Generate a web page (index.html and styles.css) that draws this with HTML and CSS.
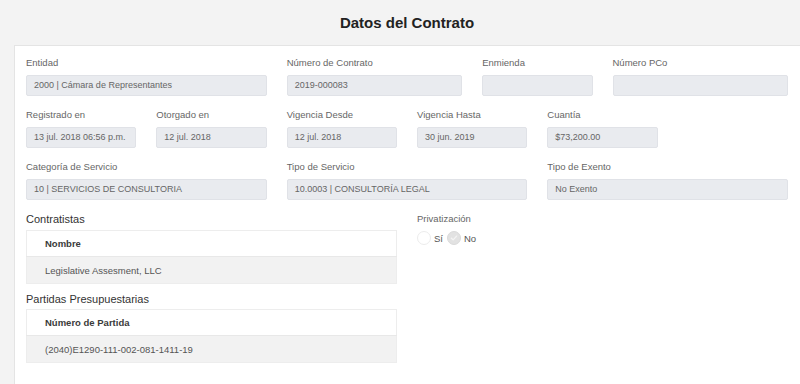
FILE: index.html
```html
<!DOCTYPE html>
<html lang="es">
<head>
  <meta charset="UTF-8" />
  <meta name="viewport" content="width=device-width, initial-scale=1.0" />
  <title>Datos del Contrato</title>
  <link rel="stylesheet" href="styles.css">
</head>
<body>
  <main class="page">
    <h1 class="title">Datos del Contrato</h1>
    <section class="card">
      <div class="grid">
        <div class="field span-4">
          <label>Entidad</label>
          <div class="input">2000 | Cámara de Representantes</div>
        </div>
        <div class="field span-3">
          <label>Número de Contrato</label>
          <div class="input">2019-000083</div>
        </div>
        <div class="field span-2">
          <label>Enmienda</label>
          <div class="input"></div>
        </div>
        <div class="field span-3">
          <label>Número PCo</label>
          <div class="input"></div>
        </div>

        <div class="field span-2">
          <label>Registrado en</label>
          <div class="input">13 jul. 2018 06:56 p.m.</div>
        </div>
        <div class="field span-2">
          <label>Otorgado en</label>
          <div class="input">12 jul. 2018</div>
        </div>
        <div class="field span-2">
          <label>Vigencia Desde</label>
          <div class="input">12 jul. 2018</div>
        </div>
        <div class="field span-2">
          <label>Vigencia Hasta</label>
          <div class="input">30 jun. 2019</div>
        </div>
        <div class="field span-2">
          <label>Cuantía</label>
          <div class="input">$73,200.00</div>
        </div>
        <div class="span-2"></div>

        <div class="field span-4">
          <label>Categoría de Servicio</label>
          <div class="input">10 | SERVICIOS DE CONSULTORIA</div>
        </div>
        <div class="field span-4">
          <label>Tipo de Servicio</label>
          <div class="input">10.0003 | CONSULTORÍA LEGAL</div>
        </div>
        <div class="field span-4">
          <label>Tipo de Exento</label>
          <div class="input">No Exento</div>
        </div>

        <div class="span-6">
          <h2 class="section-title">Contratistas</h2>
          <table class="list">
            <thead><tr><th>Nombre</th></tr></thead>
            <tbody><tr><td>Legislative Assesment, LLC</td></tr></tbody>
          </table>
          <h2 class="section-title second">Partidas Presupuestarias</h2>
          <table class="list">
            <thead><tr><th>Número de Partida</th></tr></thead>
            <tbody><tr><td>(2040)E1290-111-002-081-1411-19</td></tr></tbody>
          </table>
        </div>
        <div class="field span-6">
          <label>Privatización</label>
          <div class="radios">
            <span class="radio"></span>
            <span class="radio-text">Sí</span>
            <span class="radio checked">
              <svg viewBox="0 0 14 14" aria-hidden="true"><path d="M4 7.2l2 2 4-4.4"/></svg>
            </span>
            <span class="radio-text">No</span>
          </div>
        </div>
      </div>
    </section>
  </main>
</body>
</html>
```

FILE: styles.css
```css
body {
  margin: 0;
  background-color: #f3f3f3;
  font-family: "Liberation Sans", Arial, sans-serif;
  color: #555;
  overflow: hidden;
}
.page {
  padding-left: 14px;
  height: 100vh;
  display: flex;
  flex-direction: column;
}
.title {
  margin: 0;
  height: 45px;
  flex-shrink: 0;
  display: flex;
  align-items: center;
  justify-content: center;
  font-size: 15px;
  font-weight: bold;
  color: #222;
}
.card {
  flex: 1;
  background-color: #ffffff;
  border-top: 1px solid #e4e4e4;
  border-left: 1px solid #e4e4e4;
  padding: 10px 12px 0 11px;
  overflow: hidden;
}
.grid {
  display: grid;
  grid-template-columns: repeat(12, 1fr);
  column-gap: 20px;
  row-gap: 12px;
}
.span-2 { grid-column: span 2; }
.span-3 { grid-column: span 3; }
.span-4 { grid-column: span 4; }
.span-6 { grid-column: span 6; }
.field label {
  display: block;
  font-size: 9.5px;
  line-height: 14px;
  color: #666;
  margin-bottom: 5px;
}
.input {
  height: 21px;
  box-sizing: border-box;
  background-color: #e9ebef;
  border: 1px solid #e0e2e7;
  border-radius: 2px;
  padding: 0 7px;
  font-size: 9px;
  line-height: 19px;
  color: #666;
  white-space: nowrap;
  overflow: hidden;
}
.section-title {
  margin: 0 0 4px;
  font-size: 11px;
  font-weight: normal;
  line-height: 14px;
  color: #333;
}
.section-title.second {
  margin-top: 8px;
  margin-bottom: 3px;
}
.list {
  width: 100%;
  border-collapse: collapse;
  border: 1px solid #ededed;
  font-size: 9.5px;
}
.list th {
  text-align: left;
  font-weight: bold;
  color: #3a3a3a;
  height: 25px;
  padding: 0 18px;
  background-color: #fff;
  border-bottom: 1px solid #e8e8e8;
}
.list td {
  height: 26px;
  padding: 0 18px;
  background-color: #f2f2f2;
  color: #555;
}
.radios {
  display: flex;
  align-items: center;
  gap: 3px;
  height: 14px;
}
.radio {
  width: 14px;
  height: 14px;
  box-sizing: border-box;
  border-radius: 50%;
  border: 1px solid #ececec;
  background-color: #fff;
  display: inline-flex;
}
.radio.checked {
  background-color: #e2e2e2;
  border-color: #dadada;
}
.radio svg {
  width: 12px;
  height: 12px;
  fill: none;
  stroke: #f4f4f4;
  stroke-width: 1.6;
  stroke-linecap: round;
  stroke-linejoin: round;
}
.radio-text {
  font-size: 9.5px;
  color: #555;
  margin-right: 1px;
}
```
